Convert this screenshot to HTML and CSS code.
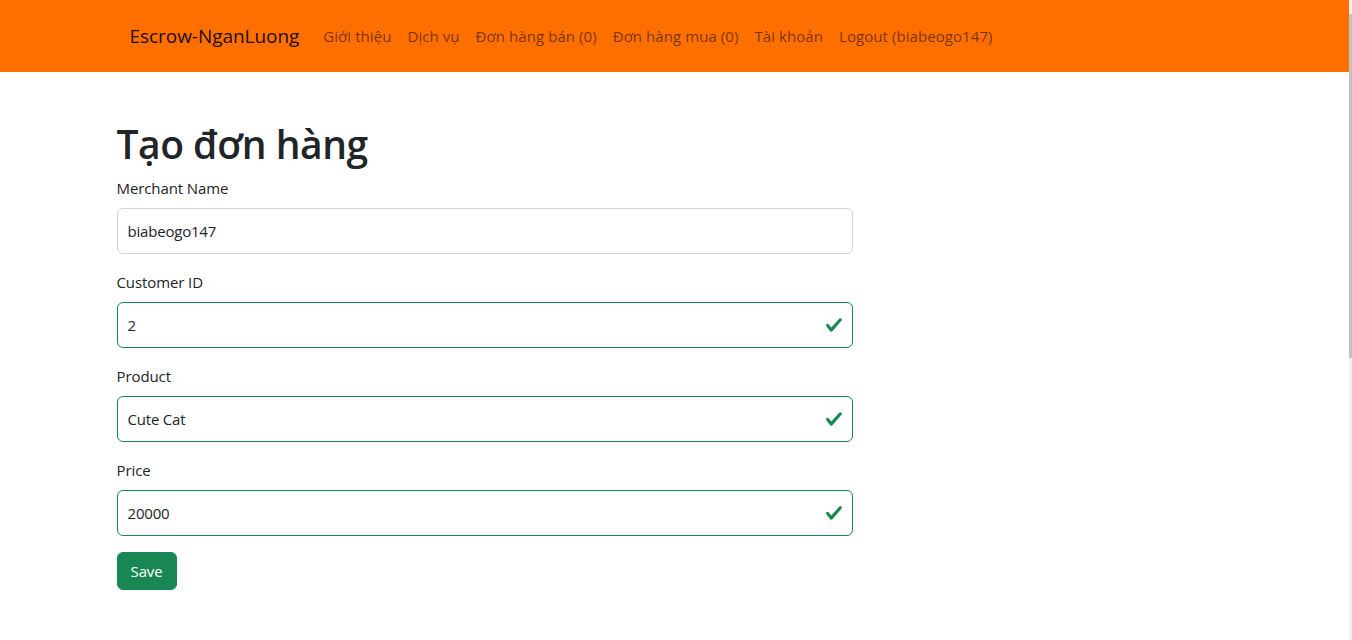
FILE: index.html
```html
<!DOCTYPE html>
<html lang="vi">
<head>
<meta charset="utf-8">
<title>Tạo đơn hàng - Escrow-NganLuong</title>
<link rel="stylesheet" href="styles.css">
</head>
<body>
<div class="page">
  <header class="navbar">
    <div class="nav-inner">
      <a class="brand" href="#">Escrow-NganLuong</a>
      <nav class="nav-links">
        <a href="#">Giới thiệu</a>
        <a href="#">Dịch vụ</a>
        <a href="#">Đơn hàng bán (0)</a>
        <a href="#">Đơn hàng mua (0)</a>
        <a href="#">Tài khoản</a>
        <a href="#">Logout (biabeogo147)</a>
      </nav>
    </div>
  </header>
  <main class="container">
    <h1 class="title">Tạo đơn hàng</h1>
    <form class="form">
      <div class="field">
        <label class="label">Merchant Name</label>
        <div class="input-wrap"><input class="input" value="biabeogo147"></div>
      </div>
      <div class="field">
        <label class="label">Customer ID</label>
        <div class="input-wrap"><input class="input valid" value="2">
          <svg class="check" viewBox="0 0 8 8"><path fill="#198754" d="M2.3 6.73.6 4.53c-.4-1.04.46-1.4 1.1-.8l1.1 1.4 3.4-3.8c.6-.63 1.6-.27 1.2.7l-4 4.6c-.43.5-.8.4-1.1.1z"/></svg>
        </div>
      </div>
      <div class="field">
        <label class="label">Product</label>
        <div class="input-wrap"><input class="input valid" value="Cute Cat">
          <svg class="check" viewBox="0 0 8 8"><path fill="#198754" d="M2.3 6.73.6 4.53c-.4-1.04.46-1.4 1.1-.8l1.1 1.4 3.4-3.8c.6-.63 1.6-.27 1.2.7l-4 4.6c-.43.5-.8.4-1.1.1z"/></svg>
        </div>
      </div>
      <div class="field">
        <label class="label">Price</label>
        <div class="input-wrap"><input class="input valid" value="20000">
          <svg class="check" viewBox="0 0 8 8"><path fill="#198754" d="M2.3 6.73.6 4.53c-.4-1.04.46-1.4 1.1-.8l1.1 1.4 3.4-3.8c.6-.63 1.6-.27 1.2.7l-4 4.6c-.43.5-.8.4-1.1.1z"/></svg>
        </div>
      </div>
      <button type="button" class="btn">Save</button>
    </form>
  </main>
</div>
<div class="scrollbar"><div class="thumb"></div></div>
</body>
</html>
```
FILE: styles.css
```css
* { box-sizing: border-box; }
html, body { margin: 0; padding: 0; height: 100%; overflow: hidden; }
body {
  font-family: "Open Sans", "Noto Sans", sans-serif;
  font-size: 16px;
  line-height: 1.5;
  color: #212529;
  background: #fff;
}
.page { width: 1349px; }
.navbar {
  background: #ff6f00;
  height: 72px;
  display: flex;
  align-items: center;
}
.nav-inner {
  width: 1140px;
  margin: 0 auto;
  padding: 0 12px 0 25px;
  display: flex;
  align-items: center;
}
.brand {
  font-size: 19px;
  color: rgba(0,0,0,.9);
  text-decoration: none;
  margin-right: 16px;
  letter-spacing: -0.05px;
}
.nav-links { display: flex; }
.nav-links a {
  font-size: 15px;
  color: rgba(0,0,0,.55);
  text-decoration: none;
  padding: 8px 8px;
  letter-spacing: 0.07px;
}
.container {
  width: 1140px;
  margin: 0 auto;
  padding: 48px 12px 0;
}
.title {
  font-size: 39px;
  font-weight: 600;
  line-height: 48px;
  margin: 0 0 8px;
  letter-spacing: -0.5px;
}
.form { width: 736px; }
.field { margin-bottom: 16px; }
.label {
  display: block;
  font-size: 15px;
  line-height: 24px;
  margin-bottom: 8px;
  letter-spacing: -0.1px;
}
.input-wrap { position: relative; }
.input {
  display: block;
  width: 100%;
  height: 46px;
  padding: 0 10px;
  font: inherit;
  font-size: 15px;
  color: #212529;
  border: 1px solid #ced4da;
  border-radius: 6px;
  background: #fff;
  letter-spacing: -0.2px;
}
.input.valid { border-color: #198754; padding-right: 40px; }
.check {
  position: absolute;
  right: 10px;
  top: 14px;
  width: 18px;
  height: 18px;
}
.btn {
  height: 38px;
  padding: 0 13px;
  font: inherit;
  font-size: 15px;
  color: #fff;
  background: #198754;
  border: 1px solid #198754;
  border-radius: 6px;
  letter-spacing: -0.1px;
}
.scrollbar {
  position: fixed;
  top: 0;
  right: 0;
  width: 3px;
  height: 100%;
  background: #f0f0f0;
}
.thumb {
  margin-top: 14px;
  height: 344px;
  background: #c2c2c2;
}
```
